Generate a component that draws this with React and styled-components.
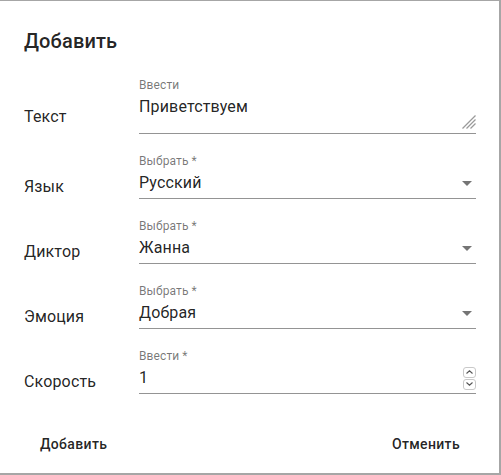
import React from "react";
import styled, { createGlobalStyle } from "styled-components";

const Global = createGlobalStyle`
  html, body { margin: 0; padding: 0; background: #fff; }
  body { font-family: Roboto, "Noto Sans", "Liberation Sans", sans-serif; }
  * { box-sizing: border-box; }
`;

const Dialog = styled.div`
  width: 501px;
  height: 475px;
  background: #fff;
  border-top: 1px solid #a6a6a6;
  border-right: 2px solid #a6a6a6;
  border-bottom: 2px solid #a6a6a6;
  display: flex;
  flex-direction: column;
  color: rgba(0, 0, 0, 0.87);
`;

const Title = styled.h2`
  margin: 0;
  padding: 24px 24px 0;
  font-size: 20px;
  font-weight: 500;
  line-height: 32px;
  letter-spacing: 0.15px;
`;

const Form = styled.div`
  display: flex;
  flex-direction: column;
  gap: 19px;
  padding: 0 23px 0 24px;
  margin-top: 20px;
`;

const Row = styled.div`
  display: flex;
  align-items: center;
`;

const RowLabel = styled.div`
  width: 115px;
  flex: none;
  padding-top: 22px;
  font-size: 16px;
  line-height: 24px;
  letter-spacing: 0.15px;
`;

const Field = styled.div`
  flex: 1;
  display: flex;
  flex-direction: column;
`;

const FieldLabel = styled.div`
  font-size: 12px;
  line-height: 16px;
  color: rgba(0, 0, 0, 0.54);
  letter-spacing: 0.1px;
`;

const InputBox = styled.div`
  position: relative;
  margin-top: 2px;
  padding-bottom: 3px;
  border-bottom: 1px solid rgba(0, 0, 0, 0.42);
  display: flex;
  align-items: center;
  justify-content: space-between;
`;

const Value = styled.div`
  font-size: 16px;
  line-height: 24px;
  height: 24px;
  letter-spacing: 0.15px;
`;

const TextArea = styled.textarea`
  display: block;
  width: 100%;
  height: 35px;
  margin: 0;
  padding: 0;
  border: none;
  outline: none;
  resize: none;
  background: transparent;
  font-family: inherit;
  font-size: 16px;
  line-height: 24px;
  letter-spacing: 0.15px;
  color: rgba(0, 0, 0, 0.87);
`;

const Grip = styled.svg`
  position: absolute;
  right: 0;
  bottom: 4px;
  width: 14px;
  height: 14px;
  pointer-events: none;
`;

const Arrow = styled.svg`
  width: 10px;
  height: 5px;
  margin-right: 4px;
  flex: none;
`;

const Spinner = styled.div`
  display: flex;
  flex-direction: column;
  gap: 1px;
  height: 24px;
  justify-content: center;
`;

const SpinBtn = styled.div`
  width: 13px;
  height: 11px;
  border: 1px solid #c9c9c9;
  border-radius: 3px;
  display: flex;
  align-items: center;
  justify-content: center;
  background: #fff;
`;

const Actions = styled.div`
  display: flex;
  justify-content: space-between;
  padding: 0 31px 0 32px;
  margin-top: 32px;
`;

const Button = styled.button`
  border: none;
  background: transparent;
  padding: 6px 8px;
  font-family: inherit;
  font-size: 14px;
  font-weight: 500;
  line-height: 24.5px;
  letter-spacing: 0.35px;
  color: rgba(0, 0, 0, 0.87);
  cursor: pointer;
`;

const DropArrow = () => (
  <Arrow viewBox="0 0 10 5">
    <path d="M0 0 L5 5 L10 0 Z" fill="rgba(0,0,0,0.54)" />
  </Arrow>
);

const SelectRow = ({ label, value }) => (
  <Row>
    <RowLabel>{label}</RowLabel>
    <Field>
      <FieldLabel>Выбрать *</FieldLabel>
      <InputBox>
        <Value>{value}</Value>
        <DropArrow />
      </InputBox>
    </Field>
  </Row>
);

export default function App() {
  return (
    <>
      <Global />
      <Dialog>
        <Title>Добавить</Title>
        <Form>
          <Row>
            <RowLabel>Текст</RowLabel>
            <Field>
              <FieldLabel>Ввести</FieldLabel>
              <InputBox>
                <TextArea defaultValue="Приветствуем" />
                <Grip viewBox="0 0 14 14">
                  <g stroke="#9a9a9a" strokeWidth="1.2">
                    <line x1="13.5" y1="0.5" x2="0.5" y2="13.5" />
                    <line x1="13.5" y1="4.5" x2="4.5" y2="13.5" />
                    <line x1="13.5" y1="8.5" x2="8.5" y2="13.5" />
                  </g>
                </Grip>
              </InputBox>
            </Field>
          </Row>
          <SelectRow label="Язык" value="Русский" />
          <SelectRow label="Диктор" value="Жанна" />
          <SelectRow label="Эмоция" value="Добрая" />
          <Row>
            <RowLabel>Скорость</RowLabel>
            <Field>
              <FieldLabel>Ввести *</FieldLabel>
              <InputBox>
                <Value>1</Value>
                <Spinner>
                  <SpinBtn>
                    <svg width="7" height="4" viewBox="0 0 7 4">
                      <path d="M0.5 3.5 L3.5 0.8 L6.5 3.5" fill="none" stroke="#555" strokeWidth="1.1" />
                    </svg>
                  </SpinBtn>
                  <SpinBtn>
                    <svg width="7" height="4" viewBox="0 0 7 4">
                      <path d="M0.5 0.5 L3.5 3.2 L6.5 0.5" fill="none" stroke="#555" strokeWidth="1.1" />
                    </svg>
                  </SpinBtn>
                </Spinner>
              </InputBox>
            </Field>
          </Row>
        </Form>
        <Actions>
          <Button>Добавить</Button>
          <Button>Отменить</Button>
        </Actions>
      </Dialog>
    </>
  );
}
